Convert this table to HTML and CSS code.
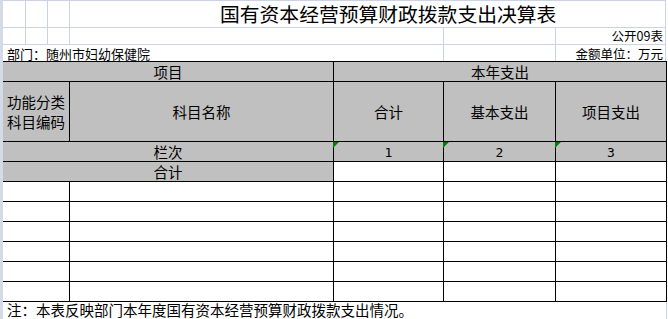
FILE: index.html
```html
<!DOCTYPE html>
<html lang="zh-CN">
<head>
<meta charset="utf-8">
<title>国有资本经营预算财政拨款支出决算表</title>
<link rel="stylesheet" href="styles.css">
</head>
<body>
<div class="sheet">
  <div class="top">
    <div class="trow title-row">
      <div class="gc"></div><div class="gc"></div><div class="gc"></div>
      <div class="title">国有资本经营预算财政拨款支出决算表</div>
    </div>
    <div class="trow r2">
      <div class="gc"></div><div class="gc"></div><div class="gc"></div>
      <div class="gc"></div><div class="gc"></div><div class="gc right">公开09表</div>
    </div>
    <div class="trow r3">
      <div class="dept">部门：随州市妇幼保健院</div>
      <div class="gc"></div><div class="gc right lower">金额单位：万元</div>
    </div>
  </div>
  <div class="grid">
    <div class="cell gray span2">项目</div>
    <div class="cell gray span3">本年支出</div>

    <div class="cell gray tall code">功能分类<br>科目编码</div>
    <div class="cell gray tall">科目名称</div>
    <div class="cell gray tall">合计</div>
    <div class="cell gray tall">基本支出</div>
    <div class="cell gray tall">项目支出</div>

    <div class="cell gray span2">栏次</div>
    <div class="cell gray num mark">1</div>
    <div class="cell gray num mark">2</div>
    <div class="cell gray num mark">3</div>

    <div class="cell gray span2">合计</div>
    <div class="cell"></div>
    <div class="cell"></div>
    <div class="cell"></div>

    <div class="cell"></div><div class="cell"></div><div class="cell"></div><div class="cell"></div><div class="cell"></div>
    <div class="cell"></div><div class="cell"></div><div class="cell"></div><div class="cell"></div><div class="cell"></div>
    <div class="cell"></div><div class="cell"></div><div class="cell"></div><div class="cell"></div><div class="cell"></div>
    <div class="cell"></div><div class="cell"></div><div class="cell"></div><div class="cell"></div><div class="cell"></div>
    <div class="cell"></div><div class="cell"></div><div class="cell"></div><div class="cell"></div><div class="cell"></div>
    <div class="cell"></div><div class="cell"></div><div class="cell"></div><div class="cell"></div><div class="cell"></div>
  </div>
  <div class="note">注：本表反映部门本年度国有资本经营预算财政拨款支出情况。</div>
</div>
</body>
</html>
```
FILE: styles.css
```css
html, body {
  margin: 0;
  padding: 0;
  background: #ffffff;
}
body {
  width: 668px;
  height: 319px;
  overflow: hidden;
  font-family: "Noto Sans CJK SC", "Noto Sans", sans-serif;
  color: #000;
}
.sheet {
  width: 665px;
  border-left: 3px solid #d3dbe8;
  height: 319px;
}
.top {
  width: 663px;
  border-top: 1px solid #c9d3e2;
}
.trow {
  display: grid;
  grid-template-columns: 23px 22px 22px 374px 112px 110px;
}
.title-row {
  height: 27px;
  border-bottom: 1px solid #c9d3e2;
  box-sizing: border-box;
}
.r2 {
  height: 17px;
  border-bottom: 1px solid #c9d3e2;
  box-sizing: border-box;
}
.r3 {
  height: 16px;
  grid-template-columns: 441px 112px 110px;
}
.gc {
  border-right: 1px solid #c9d3e2;
  box-sizing: border-box;
}
.right {
  font-size: 12.5px;
  line-height: 14px;
  padding-top: 1px;
  text-align: right;
  padding-right: 2px;
  white-space: nowrap;
}
.lower {
  padding-top: 2px;
}
.title {
  grid-column: 4 / 7;
  border-right: 1px solid #c9d3e2;
  box-sizing: border-box;
  font-size: 19.8px;
  line-height: 26px;
  padding-left: 150px;
  white-space: nowrap;
}
.dept {
  font-size: 13px;
  line-height: 15px;
  padding-top: 1px;
  padding-left: 4px;
  border-right: 1px solid #c9d3e2;
  white-space: nowrap;
}
.grid {
  display: grid;
  grid-template-columns: 67px 264px 110px 112px 111px;
  grid-template-rows: 20px 60px 20px 20px repeat(6, 20px);
  border-top: 1px solid #000;
  width: 664px;
}
.cell {
  position: relative;
  border-right: 1px solid #000;
  border-bottom: 1px solid #000;
  box-sizing: border-box;
  display: flex;
  align-items: center;
  justify-content: center;
  font-size: 14.5px;
  line-height: 19px;
  white-space: nowrap;
}
.gray {
  background: #c0c0c0;
}
.span2 {
  grid-column: span 2;
}
.span3 {
  grid-column: span 3;
}
.code {
  line-height: 20px;
  text-align: center;
}
.num {
  font-family: "DejaVu Sans Mono", monospace;
  font-size: 13px;
  padding-top: 2px;
}
.mark::before {
  content: "";
  position: absolute;
  left: -1px;
  top: 0;
  width: 0;
  height: 0;
  border-top: 6px solid #008000;
  border-right: 6px solid transparent;
}
.note {
  font-size: 14.5px;
  line-height: 16px;
  padding-left: 4px;
  white-space: nowrap;
  width: 664px;
  height: 17px;
  border-right: 1px solid #c9d3e2;
  box-sizing: border-box;
}
```
